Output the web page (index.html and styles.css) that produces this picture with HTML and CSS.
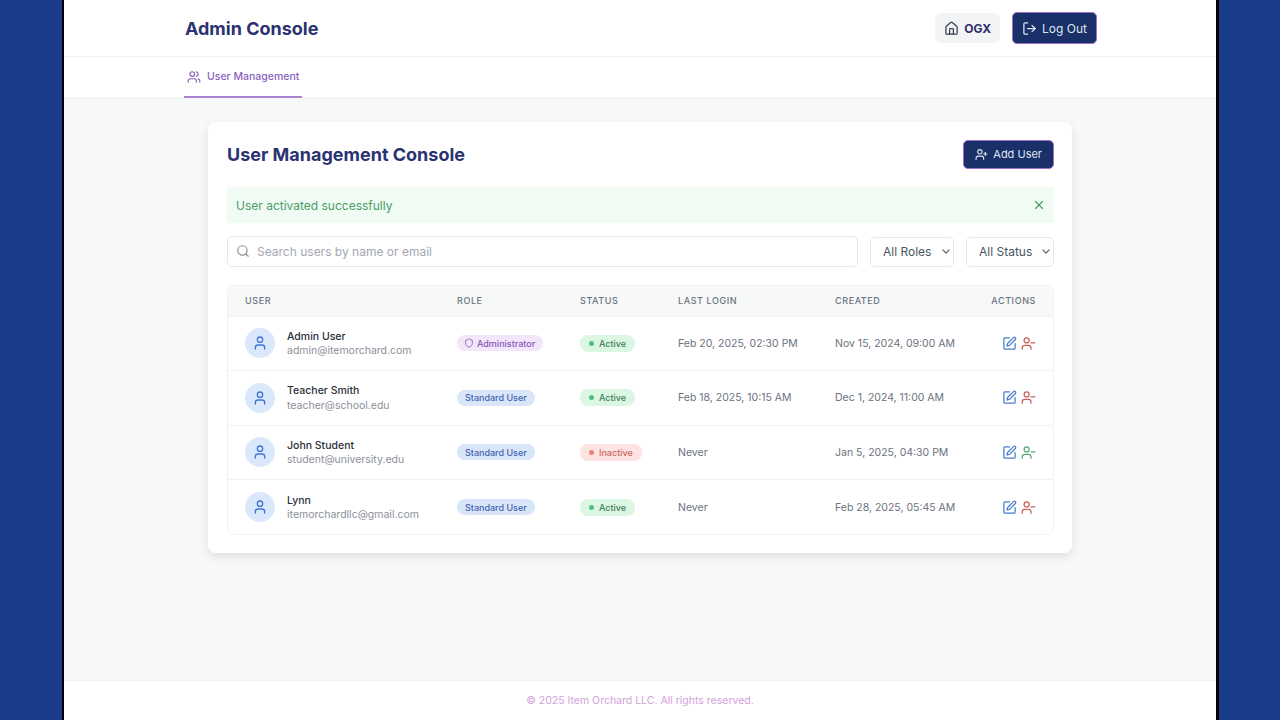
FILE: index.html
```html
<!DOCTYPE html>
<html lang="en">
  <head>
    <meta charset="UTF-8" />
    <meta name="viewport" content="width=device-width, initial-scale=1.0" />
    <title>Admin Console</title>
    <link rel="stylesheet" href="styles.css">
  </head>

  <body>
    <svg class="sprite" width="0" height="0" aria-hidden="true">
      <symbol id="i-users" viewBox="0 0 24 24"><path d="M16 21v-2a4 4 0 0 0-4-4H6a4 4 0 0 0-4 4v2"/><circle cx="9" cy="7" r="4"/><path d="M22 21v-2a4 4 0 0 0-3-3.87"/><path d="M16 3.13a4 4 0 0 1 0 7.75"/></symbol>
      <symbol id="i-user" viewBox="0 0 24 24"><path d="M19 21v-2a4 4 0 0 0-4-4H9a4 4 0 0 0-4 4v2"/><circle cx="12" cy="7" r="4"/></symbol>
      <symbol id="i-user-plus" viewBox="0 0 24 24"><path d="M16 21v-2a4 4 0 0 0-4-4H6a4 4 0 0 0-4 4v2"/><circle cx="9" cy="7" r="4"/><path d="M19 8v6"/><path d="M22 11h-6"/></symbol>
      <symbol id="i-user-minus" viewBox="0 0 24 24"><path d="M16 21v-2a4 4 0 0 0-4-4H6a4 4 0 0 0-4 4v2"/><circle cx="9" cy="7" r="4"/><path d="M22 11h-6"/></symbol>
      <symbol id="i-edit" viewBox="0 0 24 24"><path d="M12 3H5a2 2 0 0 0-2 2v14a2 2 0 0 0 2 2h14a2 2 0 0 0 2-2v-7"/><path d="M18.4 2.6a2.1 2.1 0 0 1 3 3L12 15l-4 1 1-4z"/></symbol>
      <symbol id="i-home" viewBox="0 0 24 24"><path d="M15 21v-8a1 1 0 0 0-1-1h-4a1 1 0 0 0-1 1v8"/><path d="M3 10a2 2 0 0 1 .7-1.5l7-6a2 2 0 0 1 2.6 0l7 6A2 2 0 0 1 21 10v9a2 2 0 0 1-2 2H5a2 2 0 0 1-2-2z"/></symbol>
      <symbol id="i-logout" viewBox="0 0 24 24"><path d="M9 21H5a2 2 0 0 1-2-2V5a2 2 0 0 1 2-2h4"/><path d="M16 17l5-5-5-5"/><path d="M21 12H9"/></symbol>
      <symbol id="i-shield" viewBox="0 0 24 24"><path d="M20 13c0 5-3.5 7.5-7.7 9a1 1 0 0 1-.6 0C7.500 20.500 4 18 4 13V6a1 1 0 0 1 1-1c2 0 4.500-1.200 6.200-2.700a1.200 1.200 0 0 1 1.600 0C14.500 3.800 17 5 19 5a1 1 0 0 1 1 1z"/></symbol>
      <symbol id="i-search" viewBox="0 0 24 24"><circle cx="11" cy="11" r="8"/><path d="M21 21l-4.300-4.300"/></symbol>
      <symbol id="i-x" viewBox="0 0 24 24"><path d="M18 6L6 18"/><path d="M6 6l12 12"/></symbol>
    </svg>

    <div class="app">
      <header class="topbar">
        <div class="wrap topbar-inner">
          <h1 class="brand">Admin Console</h1>
          <div class="topbar-actions">
            <div class="org"><svg class="icon icon-15"><use href="#i-home"/></svg>OGX</div>
            <button class="btn btn-logout"><svg class="icon icon-15"><use href="#i-logout"/></svg>Log Out</button>
          </div>
        </div>
      </header>

      <nav class="tabs">
        <div class="wrap">
          <a class="tab"><svg class="icon icon-14"><use href="#i-users"/></svg>User Management</a>
        </div>
      </nav>

      <main class="content">
        <section class="card">
          <div class="card-head">
            <h2>User Management Console</h2>
            <button class="btn btn-add"><svg class="icon icon-14"><use href="#i-user-plus"/></svg>Add User</button>
          </div>

          <div class="alert">
            <span>User activated successfully</span>
            <svg class="icon icon-14"><use href="#i-x"/></svg>
          </div>

          <div class="filters">
            <div class="search">
              <svg class="icon icon-14"><use href="#i-search"/></svg>
              <span>Search users by name or email</span>
            </div>
            <div class="select select-role">All Roles<svg class="icon chev" viewBox="0 0 10 6"><path d="M1 1l4 4 4-4"/></svg></div>
            <div class="select select-status">All Status<svg class="icon chev" viewBox="0 0 10 6"><path d="M1 1l4 4 4-4"/></svg></div>
          </div>

          <div class="table-box">
            <table>
              <thead>
                <tr>
                  <th class="col-user">User</th>
                  <th class="col-role">Role</th>
                  <th class="col-status">Status</th>
                  <th class="col-login">Last Login</th>
                  <th class="col-created">Created</th>
                  <th class="col-actions">Actions</th>
                </tr>
              </thead>
              <tbody>
                <tr>
                  <td><div class="user"><span class="avatar"><svg class="icon icon-16"><use href="#i-user"/></svg></span><div class="user-text"><div class="name">Admin User</div><div class="email">admin@itemorchard.com</div></div></div></td>
                  <td><span class="pill pill-admin"><svg class="icon icon-10"><use href="#i-shield"/></svg>Administrator</span></td>
                  <td><span class="pill pill-active"><i class="dot"></i>Active</span></td>
                  <td>Feb 20, 2025, 02:30 PM</td>
                  <td>Nov 15, 2024, 09:00 AM</td>
                  <td class="cell-actions"><div class="actions"><svg class="icon edit"><use href="#i-edit"/></svg><svg class="icon deact"><use href="#i-user-minus"/></svg></div></td>
                </tr>
                <tr>
                  <td><div class="user"><span class="avatar"><svg class="icon icon-16"><use href="#i-user"/></svg></span><div class="user-text"><div class="name">Teacher Smith</div><div class="email">teacher@school.edu</div></div></div></td>
                  <td><span class="pill pill-standard">Standard User</span></td>
                  <td><span class="pill pill-active"><i class="dot"></i>Active</span></td>
                  <td>Feb 18, 2025, 10:15 AM</td>
                  <td>Dec 1, 2024, 11:00 AM</td>
                  <td class="cell-actions"><div class="actions"><svg class="icon edit"><use href="#i-edit"/></svg><svg class="icon deact"><use href="#i-user-minus"/></svg></div></td>
                </tr>
                <tr>
                  <td><div class="user"><span class="avatar"><svg class="icon icon-16"><use href="#i-user"/></svg></span><div class="user-text"><div class="name">John Student</div><div class="email">student@university.edu</div></div></div></td>
                  <td><span class="pill pill-standard">Standard User</span></td>
                  <td><span class="pill pill-inactive"><i class="dot"></i>Inactive</span></td>
                  <td>Never</td>
                  <td>Jan 5, 2025, 04:30 PM</td>
                  <td class="cell-actions"><div class="actions"><svg class="icon edit"><use href="#i-edit"/></svg><svg class="icon act"><use href="#i-user-minus"/></svg></div></td>
                </tr>
                <tr>
                  <td><div class="user"><span class="avatar"><svg class="icon icon-16"><use href="#i-user"/></svg></span><div class="user-text"><div class="name">Lynn</div><div class="email">itemorchardllc@gmail.com</div></div></div></td>
                  <td><span class="pill pill-standard">Standard User</span></td>
                  <td><span class="pill pill-active"><i class="dot"></i>Active</span></td>
                  <td>Never</td>
                  <td>Feb 28, 2025, 05:45 AM</td>
                  <td class="cell-actions"><div class="actions"><svg class="icon edit"><use href="#i-edit"/></svg><svg class="icon deact"><use href="#i-user-minus"/></svg></div></td>
                </tr>
              </tbody>
            </table>
          </div>
        </section>
      </main>

      <footer class="footer">© 2025 Item Orchard LLC. All rights reserved.</footer>
    </div>
  </body>
</html>
```

FILE: styles.css
```css
* {
  box-sizing: border-box;
  margin: 0;
  padding: 0;
  font-family: Inter, "Liberation Sans", sans-serif;
}

html,
body {
  height: 100%;
  overflow: hidden;
}

body {
  background-color: #1a3a8a;
}

.sprite {
  display: block;
}

.app {
  display: flex;
  flex-direction: column;
  width: 1157px;
  height: 720px;
  margin-left: 62px;
  background-color: #f7f9f9;
  border-left: 2px solid #000;
  border-right: 3px solid #000;
}

.icon {
  display: block;
  flex-shrink: 0;
  fill: none;
  stroke: currentColor;
  stroke-width: 2;
  stroke-linecap: round;
  stroke-linejoin: round;
}

.icon-10 { width: 10px; height: 10px; }
.icon-14 { width: 14px; height: 14px; }
.icon-15 { width: 15px; height: 15px; }
.icon-16 { width: 16px; height: 16px; }

.wrap {
  width: 912px;
  margin-left: 121px;
}

/* top bar */
.topbar {
  height: 57px;
  background-color: #fff;
  border-bottom: 1px solid #f1f2f4;
}

.topbar-inner {
  display: flex;
  align-items: center;
  justify-content: space-between;
  height: 56px;
}

.brand {
  font-size: 18px;
  font-weight: 700;
  color: #2b3272;
}

.topbar-actions {
  display: flex;
  align-items: center;
  gap: 12px;
}

.org {
  display: flex;
  align-items: center;
  gap: 5px;
  height: 30px;
  padding: 0 9px;
  border-radius: 6px;
  background-color: #f3f4f6;
  font-size: 12px;
  font-weight: 700;
  color: #2f2f6b;
}

.org .icon {
  color: #374151;
}

.btn {
  display: flex;
  align-items: center;
  border: 1px solid #9a6fc4;
  border-radius: 5px;
  background-color: #1a3068;
  color: #dfe5f3;
}

.btn-logout {
  gap: 5px;
  height: 32px;
  padding: 0 9px;
  font-size: 12px;
}

/* tabs */
.tabs {
  height: 41px;
  background-color: #fff;
  border-bottom: 1px solid #f3f4f6;
}

.tab {
  display: inline-flex;
  align-items: center;
  gap: 6px;
  width: 118px;
  height: 41px;
  margin-left: -1px;
  padding-left: 3px;
  border-bottom: 2px solid #a884d0;
  font-size: 10.500px;
  font-weight: 500;
  white-space: nowrap;
  color: #8a63bd;
}

/* card */
.content {
  flex: 1;
  padding-top: 24px;
}

.card {
  width: 864px;
  margin-left: 144px;
  padding: 17px 18px 18px 19px;
  border-radius: 8px;
  background-color: #fff;
  box-shadow: 0 4px 10px rgba(0, 0, 0, 0.1);
}

.card-head {
  display: flex;
  align-items: center;
  justify-content: space-between;
  height: 30px;
  margin-bottom: 18px;
}

.card-head h2 {
  font-size: 18px;
  font-weight: 700;
  color: #2b3272;
}

.btn-add {
  gap: 5px;
  height: 29px;
  padding: 0 11px;
  font-size: 11px;
}

.btn-add .icon {
  width: 13px;
  height: 13px;
}

.alert {
  display: flex;
  align-items: center;
  justify-content: space-between;
  height: 36px;
  padding: 0 8px 0 9px;
  margin-bottom: 13px;
  background-color: #effbf3;
  font-size: 12px;
  color: #4d9c68;
}

.filters {
  display: flex;
  align-items: center;
  gap: 12px;
  margin-bottom: 18px;
}

.search {
  display: flex;
  flex: 1;
  align-items: center;
  gap: 7px;
  height: 31px;
  padding: 0 8px 1px;
  border: 1px solid #e5e7eb;
  border-radius: 5px;
  font-size: 12px;
  color: #a3a8b3;
}

.search .icon {
  color: #8a8f99;
}

.select {
  display: flex;
  align-items: center;
  justify-content: space-between;
  height: 30px;
  padding: 0 3px 1px 12px;
  border: 1px solid #e5e7eb;
  border-radius: 5px;
  font-size: 12px;
  color: #4b5563;
}

.select-role { width: 84px; }
.select-status { width: 88px; }

.chev {
  width: 8px;
  height: 5px;
  stroke-width: 1.300;
}

/* table */
.table-box {
  border: 1px solid #f1f2f4;
  border-radius: 7px;
  overflow: hidden;
}

table {
  width: 100%;
  table-layout: fixed;
  border-collapse: collapse;
}

th {
  height: 30px;
  background-color: #f7f9f9;
  border-bottom: 1px solid #f1f2f4;
  font-size: 9px;
  font-weight: 500;
  letter-spacing: 0.6px;
  text-align: left;
  text-transform: uppercase;
  color: #6b7280;
}

td {
  height: 54.600px;
  border-bottom: 1px solid #f1f2f4;
  font-size: 10.500px;
  color: #6b7280;
}

tbody tr:last-child td {
  border-bottom: 0;
}

.col-user { width: 229px; padding-left: 17px; }
.col-role { width: 123px; }
.col-status { width: 98px; }
.col-login { width: 157px; }
.col-created { width: 138px; }
.col-actions { padding-right: 17px; text-align: right; }

td:first-child {
  padding-left: 17px;
}

.cell-actions {
  padding-right: 17px;
}

.user {
  display: flex;
  align-items: center;
  gap: 12px;
}

.user-text {
  padding-top: 2px;
}

.avatar {
  display: flex;
  align-items: center;
  justify-content: center;
  width: 30px;
  height: 30px;
  border-radius: 50%;
  background-color: #dbe8fb;
  color: #3f76d8;
}

.name {
  font-size: 10.500px;
  font-weight: 500;
  line-height: 14.500px;
  color: #2a2f3a;
}

.email {
  font-size: 10.500px;
  line-height: 14.500px;
  color: #8b909a;
}

.pill {
  display: inline-flex;
  align-items: center;
  gap: 3px;
  height: 16px;
  padding: 0 8px;
  border-radius: 8px;
  font-size: 9px;
  font-weight: 500;
}

.pill-admin {
  padding: 0 8px 0 7px;
  background-color: #f2e6fb;
  color: #8655b5;
}

.pill-standard {
  background-color: #d9e6fa;
  color: #4163ad;
}

.pill-active {
  gap: 5px;
  height: 17px;
  padding: 0 9px;
  background-color: #dcf6e4;
  color: #3f7d58;
}

.pill-inactive {
  gap: 5px;
  height: 17px;
  padding: 0 9px;
  background-color: #fde3e1;
  color: #c8675f;
}

.dot {
  width: 5px;
  height: 5px;
  border-radius: 50%;
  background-color: currentColor;
}

.pill-active .dot { background-color: #4fc07a; }
.pill-inactive .dot { background-color: #ef8078; }

.actions {
  display: flex;
  justify-content: flex-end;
  align-items: center;
  gap: 4px;
}

.actions .icon { width: 15px; height: 15px; }
.edit { color: #4a7cc9; }
.deact { color: #c9615a; }
.act { color: #55a877; }

/* footer */
.footer {
  height: 40px;
  padding-top: 13px;
  background-color: #fff;
  border-top: 1px solid #f1f2f4;
  font-size: 10.500px;
  text-align: center;
  color: #d3a1dc;
}
```
